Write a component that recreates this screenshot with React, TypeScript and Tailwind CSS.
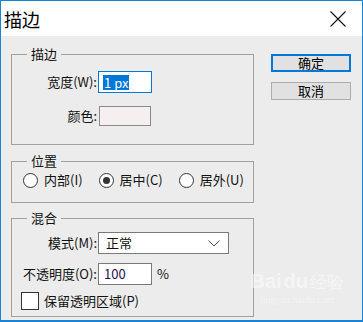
export default function App() {
  const font = "font-['Noto_Sans_CJK_SC','Noto_Sans',sans-serif]";

  return (
    <div className={`relative flex h-[322px] w-[363px] flex-col border border-b-2 border-[#1883d7] bg-[#ececec] text-[13px] leading-[16px] text-[#111] ${font}`}>
      {/* title bar */}
      <div className="flex h-[35px] shrink-0 items-center justify-between bg-white pl-[3px] pr-[16px]">
        <span className="text-[18px] leading-[20px] text-black">描边</span>
        <svg width="16" height="16" viewBox="0 0 16 16" aria-hidden="true">
          <path d="M0.5 0.5 L15.5 15.5 M15.5 0.5 L0.5 15.5" stroke="#111" strokeWidth="1.1" fill="none" />
        </svg>
      </div>

      <div className="flex flex-1 gap-[17px] pl-[10px] pt-[10px]">
        {/* left column */}
        <div className="flex w-[243px] flex-col">
          <fieldset className="h-[99px] border border-[#a0a0a0]">
            <legend className="ml-[15px] px-[4px]">描边</legend>
            <div className="mt-[9px] flex items-center">
              <span className="w-[85px] text-right">宽度(W):</span>
              <div className="ml-[1px] flex h-[22px] w-[54px] items-center border border-[#0078d7] bg-white pl-[4px]">
                <span className="bg-[#0078d7] px-[1px] leading-[15px] text-white">1 px</span>
              </div>
            </div>
            <div className="mt-[13px] flex items-center">
              <span className="w-[85px] text-right">颜色:</span>
              <div className="ml-[2px] h-[20px] w-[52px] border border-[#8a8a8a] bg-[#f5f0ef]" />
            </div>
          </fieldset>

          <fieldset className="mt-[8px] h-[50px] border border-[#a0a0a0]">
            <legend className="ml-[15px] px-[4px]">位置</legend>
            <div className="mt-[3px] flex items-center pl-[11px]">
              <Radio />
              <span className="ml-[6px]">内部(I)</span>
              <span className="ml-[16px]">
                <Radio checked />
              </span>
              <span className="ml-[6px]">居中(C)</span>
              <span className="ml-[16px]">
                <Radio />
              </span>
              <span className="ml-[6px]">居外(U)</span>
            </div>
          </fieldset>

          <fieldset className="mt-[7px] h-[107px] border border-[#a0a0a0]">
            <legend className="ml-[15px] px-[4px]">混合</legend>
            <div className="mt-[6px] flex items-center">
              <span className="w-[85px] text-right">模式(M):</span>
              <div className="ml-[1px] flex h-[22px] w-[131px] items-center justify-between border border-[#7a7a7a] bg-white pl-[7px] pr-[8px]">
                <span>正常</span>
                <svg width="12" height="7" viewBox="0 0 12 7" aria-hidden="true">
                  <path d="M0.5 0.5 L6 6 L11.5 0.5" stroke="#555" strokeWidth="1" fill="none" />
                </svg>
              </div>
            </div>
            <div className="mt-[9px] flex items-center">
              <span className="w-[85px] text-right">不透明度(O):</span>
              <div className="ml-[1px] flex h-[22px] w-[54px] items-center border border-[#7a7a7a] bg-white pl-[5px]">
                <span className="text-[#2a1050]">100</span>
              </div>
              <span className="ml-[5px]">%</span>
            </div>
            <div className="mt-[7px] flex items-center pl-[9px]">
              <div className="h-[18px] w-[18px] border border-[#333] bg-white" />
              <span className="ml-[5px]">保留透明区域(P)</span>
            </div>
          </fieldset>
        </div>

        {/* buttons */}
        <div className="flex flex-col gap-[10px] pt-[8px]">
          <button className="h-[18px] w-[80px] border-2 border-[#0078d7] bg-[#e1e1e1] text-[13px] leading-[14px] text-black">
            确定
          </button>
          <button className="h-[18px] w-[80px] border border-[#adadad] bg-[#e1e1e1] text-[13px] leading-[14px] text-black">
            取消
          </button>
        </div>
      </div>

      {/* watermark */}
      <div className="pointer-events-none absolute bottom-[14px] right-[18px] flex flex-col items-center text-white opacity-50">
        <span className="font-['Liberation_Sans',sans-serif] text-[20px] font-bold leading-[22px]">
          Bai<span className="mx-[2px]">du</span>
          <span className="text-[17px] font-normal">经验</span>
        </span>
        <span className="font-['Liberation_Serif',serif] text-[10px] leading-[12px] opacity-80">jingyan.baidu.com</span>
      </div>
    </div>
  );
}

function Radio({ checked = false }: { checked?: boolean }) {
  return (
    <span className="flex h-[15px] w-[15px] items-center justify-center rounded-full border border-[#333] bg-white">
      {checked ? <span className="h-[7px] w-[7px] rounded-full bg-[#333]" /> : null}
    </span>
  );
}
